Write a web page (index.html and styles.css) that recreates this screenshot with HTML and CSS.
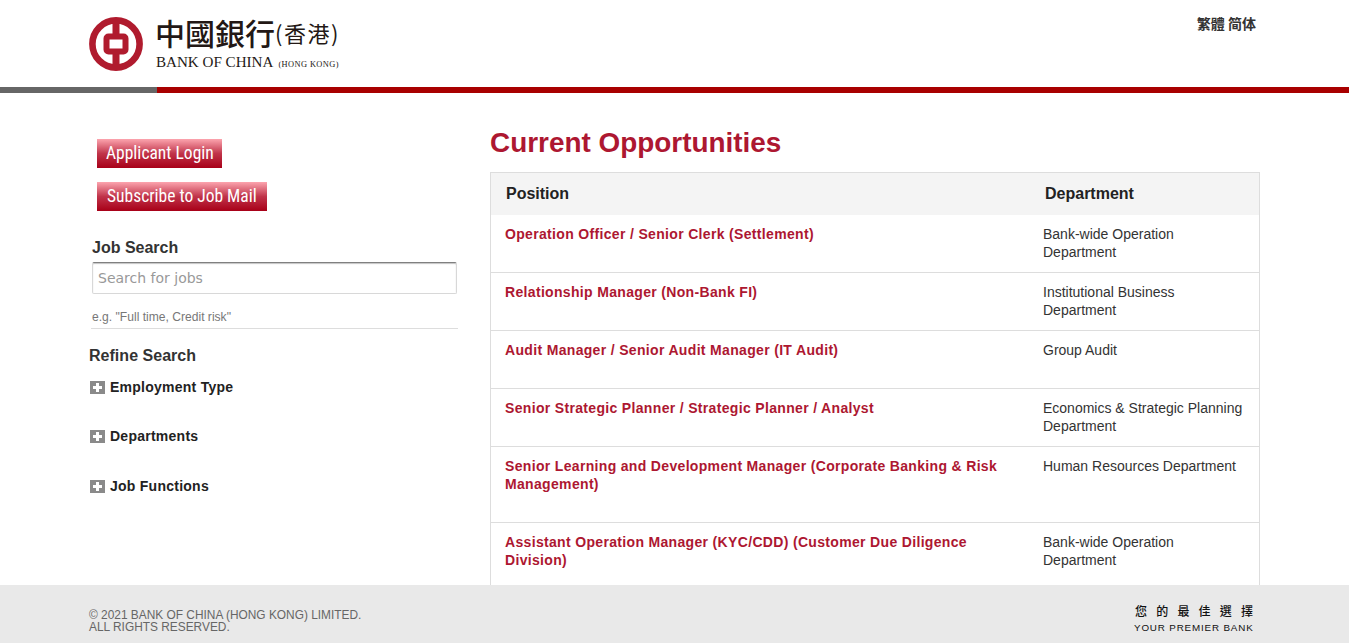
FILE: index.html
```html
<!DOCTYPE html>
<html lang="en">
<head>
<meta charset="utf-8">
<title>Current Opportunities</title>
<link rel="stylesheet" href="styles.css">
</head>
<body>
<div class="page">
  <header class="header">
    <div class="logo">
      <svg class="logo-mark" width="54" height="54" viewBox="0 0 54 54" aria-hidden="true">
        <circle cx="27" cy="27" r="23.600" fill="none" stroke="#b01b2e" stroke-width="6.600"/>
        <rect x="23.500" y="4" width="7" height="46" fill="#b01b2e"/>
        <rect x="17.500" y="19.500" width="19" height="15" rx="2" fill="#fff" stroke="#b01b2e" stroke-width="6"/>
      </svg>
      <div class="logo-text">
        <div class="logo-cn"><span class="logo-cn-main">中國銀行</span><span class="logo-cn-sub">(香港)</span></div>
        <div class="logo-en"><span>BANK OF CHINA</span><small>(HONG KONG)</small></div>
      </div>
    </div>
    <nav class="lang"><a>繁體</a> <a>简体</a></nav>
  </header>
  <div class="rule"><div class="rule-grey"></div><div class="rule-red"></div></div>
  <main class="main">
    <aside class="side">
      <a class="btn btn-login">Applicant Login</a>
      <a class="btn btn-mail">Subscribe to Job Mail</a>
      <h3 class="job-title">Job Search</h3>
      <div class="search-input">Search for jobs</div>
      <div class="search-hint">e.g. "Full time, Credit risk"</div>
      <h3 class="refine-title">Refine Search</h3>
      <div class="filter filter-first"><span class="plus"></span>Employment Type</div>
      <div class="filter"><span class="plus"></span>Departments</div>
      <div class="filter filter-last"><span class="plus"></span>Job Functions</div>
    </aside>
    <section class="content">
      <h1 class="title">Current Opportunities</h1>
      <div class="table">
        <div class="row head"><div class="pos">Position</div><div class="dep">Department</div></div>
        <div class="row"><a class="pos">Operation Officer / Senior Clerk (Settlement)</a><div class="dep">Bank-wide Operation Department</div></div>
        <div class="row"><a class="pos">Relationship Manager (Non-Bank FI)</a><div class="dep">Institutional Business Department</div></div>
        <div class="row"><a class="pos">Audit Manager / Senior Audit Manager (IT Audit)</a><div class="dep">Group Audit</div></div>
        <div class="row"><a class="pos">Senior Strategic Planner / Strategic Planner / Analyst</a><div class="dep">Economics &amp; Strategic Planning Department</div></div>
        <div class="row tall"><a class="pos">Senior Learning and Development Manager (Corporate Banking &amp; Risk Management)</a><div class="dep">Human Resources Department</div></div>
        <div class="row tall"><a class="pos">Assistant Operation Manager (KYC/CDD) (Customer Due Diligence Division)</a><div class="dep">Bank-wide Operation Department</div></div>
      </div>
    </section>
  </main>
  <footer class="footer">
    <div class="copy">© 2021 BANK OF CHINA (HONG KONG) LIMITED.<br>ALL RIGHTS RESERVED.</div>
    <div class="slogan"><div class="slogan-cn">您的最佳選擇</div><div class="slogan-en">YOUR PREMIER BANK</div></div>
  </footer>
</div>
</body>
</html>
```

FILE: styles.css
```css
* { box-sizing: border-box; }
html, body { margin: 0; height: 100%; overflow: hidden; background: #fff; }
body { font-family: "Liberation Sans", Arial, sans-serif; color: #222; }
.page { width: 1349px; height: 643px; overflow: hidden; position: relative; }

.header { height: 87px; display: flex; justify-content: space-between; padding: 16px 93px 0 89px; }
.logo { display: flex; gap: 12px; align-items: flex-start; }
.logo-mark { margin-top: 1px; }
.logo-text { width: 190px; margin-top: -2px; color: #231815; }
.logo-cn { display: flex; align-items: center; height: 36px; font-family: "Noto Sans CJK TC", sans-serif; white-space: nowrap; }
.logo-cn-main { font-size: 30px; line-height: 36px; font-weight: 500; width: 120px; }
.logo-cn-sub { font-size: 22px; line-height: 36px; letter-spacing: 1.500px; }
.logo-en { margin-top: 4px; font-family: "Liberation Serif", serif; font-size: 15.100px; line-height: 16px; white-space: nowrap; padding-left: 1px; }
.logo-en small { font-size: 8.400px; margin-left: 5px; letter-spacing: .4px; }
.lang { font-family: "Noto Sans CJK TC", sans-serif; font-size: 14px; font-weight: 700; line-height: 18px; color: #333; margin-top: -2px; }

.rule { display: flex; height: 6px; }
.rule-grey { width: 157px; background: #666; }
.rule-red { flex: 1; background: #a80000; }

.main { display: flex; }
.side { width: 490px; padding: 46px 0 0 89px; }
.btn { display: block; height: 29px; margin-left: 8px; color: #fff; font-size: 17.500px; line-height: 29px; white-space: nowrap; background: linear-gradient(#fca4ae, #c0344a 50%, #a80018); font-family: "Roboto", "Liberation Sans", sans-serif; font-stretch: condensed; }
.btn-login { width: 125px; padding-left: 9px; }
.btn-mail { width: 170px; padding-left: 10px; margin-top: 14px; }
.job-title { margin: 27px 0 0 3px; font-size: 16px; line-height: 20px; font-weight: 700; color: #333; }
.search-input { width: 365px; height: 32px; margin: 4px 0 0 3px; padding: 0 5px; border: 1px solid #d8d8d8; border-top: 1px solid #808080; border-radius: 2px; box-shadow: inset 0 1px 1px #c4c4c4; font-family: "DejaVu Sans", sans-serif; font-size: 14px; line-height: 30px; color: #999; }
.search-hint { width: 367px; height: 35px; margin-left: 2px; padding: 16px 0 0 1px; border-bottom: 1px solid #ddd; font-size: 12.100px; line-height: 14px; color: #777; }
.refine-title { margin: 17px 0 0; font-size: 16px; line-height: 20px; font-weight: 700; color: #333; letter-spacing: .03px; }
.filter { display: flex; align-items: center; gap: 5px; margin: 31px 0 0 1px; height: 18px; font-size: 14px; font-weight: 700; letter-spacing: .25px; color: #222; }
.filter-first { margin-top: 12px; }
.filter-last { margin-top: 32px; }
.plus { width: 15px; height: 13px; background: linear-gradient(#fff, #fff) center / 9px 3px no-repeat, linear-gradient(#fff, #fff) center / 3px 9px no-repeat, #8a8a8a; }

.content { width: 770px; }
.title { margin: 34px 0 0; height: 45px; font-size: 27.900px; line-height: 32px; font-weight: 700; color: #ad1731; }
.table { border: 1px solid #ddd; border-bottom: 0; }
.row { display: flex; height: 58px; border-bottom: 1px solid #ddd; padding-top: 10px; font-size: 14px; line-height: 18px; color: #333; }
.row.tall { height: 76px; }
.row.head { height: 42px; padding-top: 11px; background: #f4f4f4; border-bottom: 0; font-size: 16px; line-height: 20px; font-weight: 700; color: #222; }
.pos { width: 552px; padding: 0 20px 0 14px; }
.dep { width: 216px; padding-right: 14px; }
.row a.pos { font-weight: 700; color: #ad1731; letter-spacing: .33px; }
.row.head .pos { padding-left: 15px; }
.row.head .dep { padding-left: 2px; }

.footer { position: absolute; left: 0; right: 0; bottom: 0; height: 58px; display: flex; justify-content: space-between; padding: 24px 94px 0 89px; background: #e9e9e9; }
.copy { font-size: 11.900px; line-height: 12px; color: #666; }
.slogan { margin-top: -6px; color: #111; width: 121px; }
.slogan-cn { font-family: "Noto Sans CJK TC", sans-serif; font-size: 12px; line-height: 16px; letter-spacing: 9.200px; font-weight: 500; padding-left: 1px; white-space: nowrap; }
.slogan-en { margin-top: 2px; font-size: 9.800px; line-height: 14px; letter-spacing: .85px; white-space: nowrap; }
```
